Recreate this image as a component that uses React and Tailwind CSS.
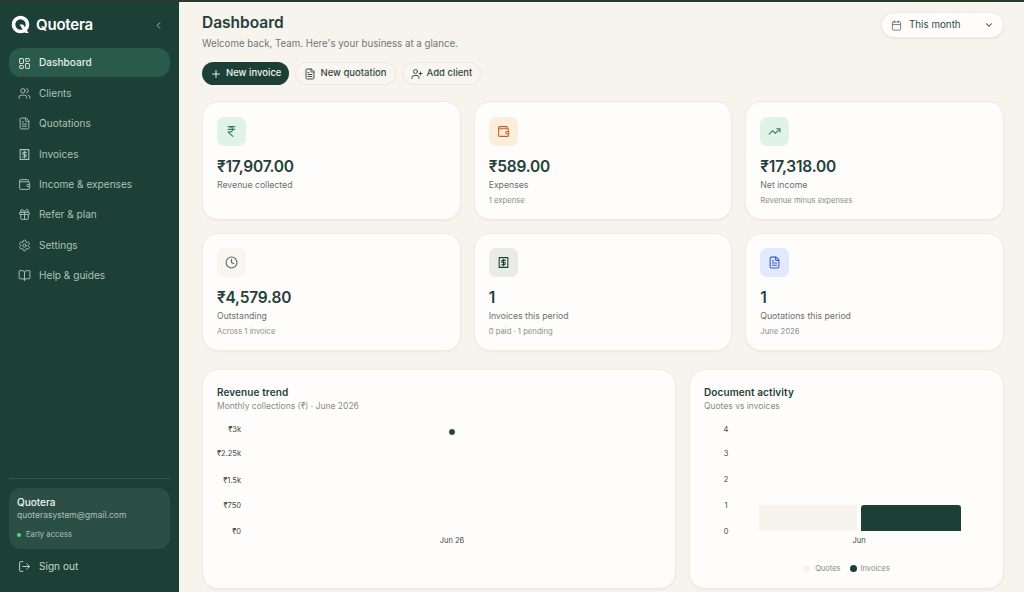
import React from "react";
import {
  BookOpen,
  Calendar,
  ChevronDown,
  ChevronLeft,
  Clock,
  FileText,
  Gift,
  IndianRupee,
  LayoutDashboard,
  LogOut,
  Plus,
  Settings,
  TrendingUp,
  UserPlus,
  Users,
  Wallet,
} from "lucide-react";

const InvoiceIcon = ({ className }) => (
  <svg viewBox="0 0 24 24" fill="none" stroke="currentColor" strokeWidth="2" strokeLinecap="round" strokeLinejoin="round" className={className}>
    <path d="M4 3h16v18H4z" />
    <path d="M15.5 8h-5a1.8 1.8 0 0 0 0 4h3a1.8 1.8 0 0 1 0 4h-5" />
    <path d="M12 6v12" />
  </svg>
);

const navItems = [
  { label: "Dashboard", icon: LayoutDashboard, active: true },
  { label: "Clients", icon: Users },
  { label: "Quotations", icon: FileText },
  { label: "Invoices", icon: InvoiceIcon },
  { label: "Income & expenses", icon: Wallet },
  { label: "Refer & plan", icon: Gift },
  { label: "Settings", icon: Settings },
  { label: "Help & guides", icon: BookOpen },
];

const stats = [
  { value: "₹17,907.00", label: "Revenue collected", icon: IndianRupee, tile: "bg-[#e1f2e9]", tint: "text-[#2f8060]" },
  { value: "₹589.00", label: "Expenses", sub: "1 expense", icon: Wallet, tile: "bg-[#fbeeda]", tint: "text-[#c2622a]" },
  { value: "₹17,318.00", label: "Net income", sub: "Revenue minus expenses", icon: TrendingUp, tile: "bg-[#e1f2e9]", tint: "text-[#2f8060]" },
  { value: "₹4,579.80", label: "Outstanding", sub: "Across 1 invoice", icon: Clock, tile: "bg-[#f8f6f2]", tint: "text-[#5f6763]" },
  { value: "1", label: "Invoices this period", sub: "0 paid · 1 pending", icon: InvoiceIcon, tile: "bg-[#e8ebe8]", tint: "text-[#1c4035]" },
  { value: "1", label: "Quotations this period", sub: "June 2026", icon: FileText, tile: "bg-[#e0e9fd]", tint: "text-[#3a5bd0]" },
];

const Sidebar = () => (
  <aside className="flex w-[179px] shrink-0 flex-col bg-[#1c4035] px-[9px] pb-[11px]">
    <div className="flex h-[46px] items-center pl-[2px] pr-[6px]">
      <svg viewBox="0 0 20 20" className="h-[20px] w-[20px] text-white" fill="none">
        <circle cx="9.5" cy="9.5" r="7" stroke="currentColor" strokeWidth="3.6" />
        <path d="M8.5 9.5l5.5 8.5h3.6l-5.5-8.5z" fill="currentColor" />
      </svg>
      <span className="ml-[5px] text-[15px] font-semibold tracking-[-0.2px] text-white">Quotera</span>
      <ChevronLeft className="ml-auto h-[11px] w-[11px] text-[#a9c2b8]" />
    </div>
    <nav className="flex flex-col gap-[1.36px]">
      {navItems.map((item) => (
        <div
          key={item.label}
          className={`flex h-[29px] items-center gap-[8px] rounded-[12px] px-[9px] pt-[1px] text-[10.1px] ${item.active ? "bg-[#2a5a4a] font-medium text-[#e6efeb]" : "text-[#a9c2b8]"}`}
        >
          <item.icon className="h-[13px] w-[13px] shrink-0" strokeWidth={1.75} />
          {item.label}
        </div>
      ))}
    </nav>
    <div className="mt-auto border-t border-[#34574c] pt-[9px]">
      <div className="flex h-[61px] flex-col rounded-[12px] bg-[#2b4f45] px-[8px] pt-[7px]">
        <span className="text-[10px] font-medium leading-[14px] text-[#f1f5f3]">Quotera</span>
        <span className="text-[8.5px] leading-[12px] text-[#a9c2b8]">quoterasystem@gmail.com</span>
        <span className="mt-[8px] flex items-center gap-[5px] text-[7.7px] text-[#a9c2b8]">
          <span className="h-[4px] w-[4px] rounded-full bg-[#4ade80]" />
          Early access
        </span>
      </div>
      <div className="mt-[3px] flex h-[29px] items-center gap-[8px] px-[9px] text-[10.1px] text-[#c4d5ce]">
        <LogOut className="h-[13px] w-[13px]" strokeWidth={1.75} />
        Sign out
      </div>
    </div>
  </aside>
);

const StatCard = ({ value, label, sub, icon: Icon, tile, tint }) => (
  <div className="h-[118.5px] rounded-[16px] border border-[#efebe4] bg-[#fffdfb] px-[14px] pt-[14.5px] shadow-[0_1px_2px_rgba(60,50,30,0.06)]">
    <div className={`flex h-[29px] w-[29px] items-center justify-center rounded-[7px] ${tile}`}>
      <Icon className={`h-[13px] w-[13px] ${tint}`} strokeWidth={2} />
    </div>
    <div className="mt-[10px] text-[15.5px] font-semibold leading-[22px] tracking-[-0.2px] text-[#24403a]">{value}</div>
    <div className="mt-[1px] text-[8.7px] leading-[12px] text-[#69716d]">{label}</div>
    {sub && <div className="mt-[4px] text-[7.7px] leading-[11px] text-[#8a908c]">{sub}</div>}
  </div>
);

const ActionButton = ({ icon: Icon, children, primary }) => (
  <button
    className={`flex h-[23px] items-center gap-[4px] rounded-full px-[8px] text-[9.5px] font-medium ${primary ? "bg-[#1c4035] text-[#eef3f0]" : "border border-[#ebe6de] bg-[#f9f6f1] text-[#33493f]"}`}
  >
    <Icon className="h-[12px] w-[12px]" strokeWidth={1.9} />
    {children}
  </button>
);

const ChartCard = ({ title, subtitle, className, children }) => (
  <div className={`h-[220px] rounded-[16px] border border-[#efebe4] bg-[#fffdfb] px-[14px] pt-[16px] shadow-[0_1px_2px_rgba(60,50,30,0.06)] ${className}`}>
    <div className="text-[10px] font-semibold leading-[13px] tracking-[0.1px] text-[#24403a]">{title}</div>
    <div className="mt-[1px] text-[8.5px] leading-[13px] text-[#868c88]">{subtitle}</div>
    {children}
  </div>
);

const RevenueChart = () => (
  <svg viewBox="0 0 444 130" className="mt-[7.5px] h-[130px] w-[444px] text-[7.5px]" fill="#3f4744">
    {[["₹3k", 11.5], ["₹2.25k", 35.5], ["₹1.5k", 62.5], ["₹750", 87.5], ["₹0", 113.5]].map(([t, y]) => (
      <text key={t} x="24" y={y} textAnchor="end">{t}</text>
    ))}
    <circle cx="235" cy="12" r="3" fill="#1c4035" stroke="#8aa69b" strokeWidth="0.7" />
    <text x="235" y="122.5" textAnchor="middle">Jun 26</text>
  </svg>
);

const ActivityChart = () => (
  <>
    <svg viewBox="0 0 285 130" className="mt-[7.5px] h-[130px] w-[285px] text-[7.5px]" fill="#3f4744">
      {[["4", 11.5], ["3", 35.5], ["2", 61.5], ["1", 87.5], ["0", 113.5]].map(([t, y]) => (
        <text key={t} x="22" y={y} textAnchor="middle">{t}</text>
      ))}
      <path d="M55 85h98v26H55z" fill="#f7f4ee" />
      <path d="M157 111V88a3 3 0 0 1 3-3h94a3 3 0 0 1 3 3v23z" fill="#1c4035" />
      <text x="155" y="122.5" textAnchor="middle">Jun</text>
    </svg>
    <div className="mt-[13px] flex justify-center gap-[9px] text-[7.5px] leading-[11px] text-[#868c88]">
      <span className="flex items-center gap-[5px]">
        <span className="h-[7px] w-[7px] rounded-full bg-[#f7f4ee]" />
        Quotes
      </span>
      <span className="flex items-center gap-[4px]">
        <span className="h-[7px] w-[7px] rounded-full bg-[#1c4035]" />
        Invoices
      </span>
    </div>
  </>
);

const App = () => (
  <div className="flex h-[592px] w-[1024px] flex-col overflow-hidden bg-[#f7f4ee] font-['Inter',sans-serif]">
    <div className="h-[2px] shrink-0 bg-[#2b3a2f]" />
    <div className="flex min-h-0 flex-1">
      <Sidebar />
      <main className="min-w-0 flex-1 pl-[23px] pr-[20px]">
        <div className="flex items-start justify-between">
          <div className="pt-[11px]">
            <h1 className="text-[15.5px] font-semibold leading-[20px] text-[#24403a]">Dashboard</h1>
            <p className="mt-[4px] text-[9.7px] leading-[14px] text-[#6f7672]">
              Welcome back, Team. Here's your business at a glance.
            </p>
          </div>
          <button className="mt-[10px] flex h-[26px] w-[123px] items-center rounded-full border border-[#efebe4] bg-[#fffdfb] px-[9px] text-[9.8px] text-[#33493f] shadow-[0_1px_2px_rgba(60,50,30,0.08)]">
            <Calendar className="h-[11px] w-[11px] text-[#6f7672]" />
            <span className="ml-[7px]">This month</span>
            <ChevronDown className="ml-auto h-[10px] w-[10px]" strokeWidth={2.5} />
          </button>
        </div>
        <div className="mt-[11px] flex gap-[6px]">
          <ActionButton icon={Plus} primary>New invoice</ActionButton>
          <ActionButton icon={FileText}>New quotation</ActionButton>
          <ActionButton icon={UserPlus}>Add client</ActionButton>
        </div>
        <div className="mt-[16px] grid grid-cols-3 gap-[13px]">
          {stats.map((stat) => (
            <StatCard key={stat.label} {...stat} />
          ))}
        </div>
        <div className="mt-[17.5px] flex gap-[13px]">
          <ChartCard title="Revenue trend" subtitle="Monthly collections (₹) · June 2026" className="w-[474px]">
            <RevenueChart />
          </ChartCard>
          <ChartCard title="Document activity" subtitle="Quotes vs invoices" className="min-w-0 flex-1">
            <ActivityChart />
          </ChartCard>
        </div>
      </main>
    </div>
  </div>
);

export default App;
